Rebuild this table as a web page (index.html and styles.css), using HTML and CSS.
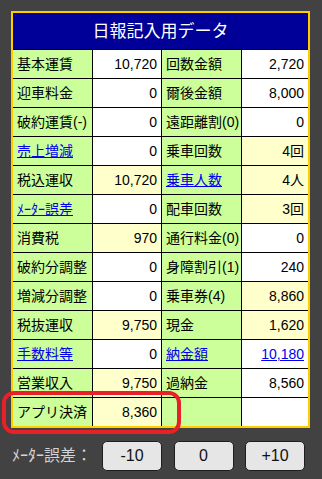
FILE: index.html
```html
<!DOCTYPE html>
<html lang="ja">
<head>
<meta charset="utf-8">
<title>日報記入用データ</title>
<link rel="stylesheet" href="styles.css">
</head>
<body>
<div class="page">
  <div class="sheet">
    <div class="title">日報記入用データ</div>

    <div class="lbl">基本運賃</div><div class="val">10,720</div>
    <div class="lbl">回数金額</div><div class="val">2,720</div>

    <div class="lbl">迎車料金</div><div class="val">0</div>
    <div class="lbl">爾後金額</div><div class="val">8,000</div>

    <div class="lbl">破約運賃(-)</div><div class="val">0</div>
    <div class="lbl">遠距離割(0)</div><div class="val">0</div>

    <div class="lbl"><a href="#">売上増減</a></div><div class="val">0</div>
    <div class="lbl">乗車回数</div><div class="val calc">4回</div>

    <div class="lbl">税込運収</div><div class="val calc">10,720</div>
    <div class="lbl"><a href="#">乗車人数</a></div><div class="val calc">4人</div>

    <div class="lbl"><a href="#" class="small">ﾒｰﾀｰ誤差</a></div><div class="val">0</div>
    <div class="lbl">配車回数</div><div class="val calc">3回</div>

    <div class="lbl">消費税</div><div class="val calc">970</div>
    <div class="lbl">通行料金(0)</div><div class="val">0</div>

    <div class="lbl">破約分調整</div><div class="val">0</div>
    <div class="lbl">身障割引(1)</div><div class="val">240</div>

    <div class="lbl">増減分調整</div><div class="val">0</div>
    <div class="lbl">乗車券(4)</div><div class="val calc">8,860</div>

    <div class="lbl">税抜運収</div><div class="val calc">9,750</div>
    <div class="lbl">現金</div><div class="val calc">1,620</div>

    <div class="lbl"><a href="#">手数料等</a></div><div class="val">0</div>
    <div class="lbl"><a href="#">納金額</a></div><div class="val"><a href="#">10,180</a></div>

    <div class="lbl">営業収入</div><div class="val calc">9,750</div>
    <div class="lbl">過納金</div><div class="val">8,560</div>

    <div class="lbl">アプリ決済</div><div class="val calc">8,360</div>
    <div class="lbl"></div><div class="val"></div>
  </div>

  <div class="highlight"></div>

  <div class="controls">
    <span class="ctl-label">ﾒｰﾀｰ誤差：</span>
    <button class="btn" type="button">-10</button>
    <button class="btn" type="button">0</button>
    <button class="btn" type="button">+10</button>
  </div>
</div>
</body>
</html>
```

FILE: styles.css
```css
html, body {
  margin: 0;
  padding: 0;
  background: #424242;
}

body {
  font-family: "Liberation Sans", "Noto Sans CJK JP", sans-serif;
}

.page {
  position: relative;
  width: 322px;
  height: 479px;
  box-sizing: border-box;
  padding: 11px 0 0 11px;
}

.sheet {
  display: grid;
  grid-template-columns: 79px 68px 79px 66px;
  grid-template-rows: 36px repeat(13, 28px);
  gap: 1px;
  width: 299px;
  box-sizing: border-box;
  border: 2px solid #ffcc00;
  background: #000;
}

.title {
  grid-column: 1 / -1;
  background: #000099;
  color: #ffffff;
  font-size: 17px;
  display: flex;
  align-items: center;
  justify-content: center;
  line-height: 1;
}

.lbl,
.val {
  display: flex;
  align-items: center;
  font-size: 14px;
  line-height: 1;
  color: #000;
  white-space: nowrap;
  overflow: hidden;
}

.lbl {
  background: #ccff99;
  padding-left: 4px;
}

.val {
  background: #ffffff;
  justify-content: flex-end;
  padding-right: 4px;
}

.val.calc {
  background: #ffffcc;
}

.sheet a {
  color: #0000ee;
  text-decoration: underline;
}

.sheet a.small {
  font-size: 14px;
}

.highlight {
  position: absolute;
  left: 2px;
  top: 391px;
  width: 179px;
  height: 43px;
  box-sizing: border-box;
  border: 4px solid #e8202a;
  border-radius: 12px;
}

.controls {
  display: flex;
  align-items: center;
  margin-top: 13px;
}

.ctl-label {
  flex: 0 0 90px;
  margin-left: 1px;
  color: #d4d4d4;
  font-size: 16px;
  line-height: 1;
  white-space: nowrap;
}

.btn {
  width: 60px;
  height: 30px;
  margin-right: 11.5px;
  box-sizing: border-box;
  border: 1px solid #1e1e1e;
  border-radius: 5px;
  background: #e6e6e6;
  color: #111;
  font-family: "Liberation Sans", sans-serif;
  font-size: 16px;
  padding: 0;
}
```
